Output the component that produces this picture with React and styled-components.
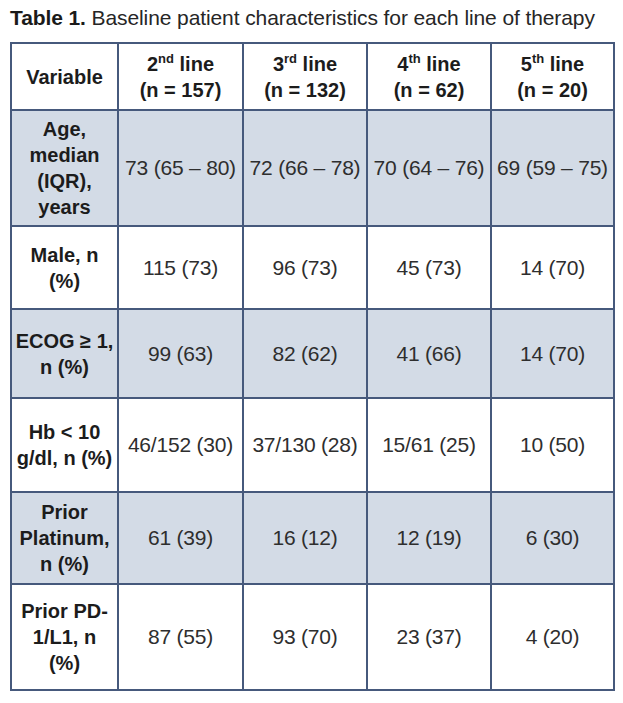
import React from 'react';
import styled, { createGlobalStyle } from 'styled-components';

const GlobalStyle = createGlobalStyle`
    html, body {
        margin: 0;
        padding: 0;
        background: #ffffff;
    }
    body {
        font-family: "Liberation Sans", Arial, sans-serif;
    }
`

const rows = [
    { label: ['Age,', 'median', '(IQR),', 'years'], values: ['73 (65 – 80)', '72 (66 – 78)', '70 (64 – 76)', '69 (59 – 75)'], height: 116, shaded: true },
    { label: ['Male, n', '(%)'], values: ['115 (73)', '96 (73)', '45 (73)', '14 (70)'], height: 83 },
    { label: ['ECOG ≥ 1,', 'n (%)'], values: ['99 (63)', '82 (62)', '41 (66)', '14 (70)'], height: 89, shaded: true },
    { label: ['Hb < 10', 'g/dl, n (%)'], values: ['46/152 (30)', '37/130 (28)', '15/61 (25)', '10 (50)'], height: 94 },
    { label: ['Prior', 'Platinum,', 'n (%)'], values: ['61 (39)', '16 (12)', '12 (19)', '6 (30)'], height: 92, shaded: true },
    { label: ['Prior PD-', '1/L1, n', '(%)'], values: ['87 (55)', '93 (70)', '23 (37)', '4 (20)'], height: 106 },
]

const lines = [
    { num: '2', sup: 'nd', n: 157 },
    { num: '3', sup: 'rd', n: 132 },
    { num: '4', sup: 'th', n: 62 },
    { num: '5', sup: 'th', n: 20 },
]

function App() {
    return (
        <Page>
            <GlobalStyle />
            <Caption>
                <b>Table 1.</b> Baseline patient characteristics for each line of therapy
            </Caption>
            <Table>
                <colgroup>
                    <col style={{ width: 107 }} />
                    <col style={{ width: 125 }} />
                    <col style={{ width: 124 }} />
                    <col style={{ width: 124 }} />
                    <col style={{ width: 123 }} />
                </colgroup>
                <thead>
                    <Row height={67}>
                        <HeadCell>Variable</HeadCell>
                        {lines.map((l) => (
                            <HeadCell key={l.num}>
                                {l.num}<Sup>{l.sup}</Sup> line<br />(n = {l.n})
                            </HeadCell>
                        ))}
                    </Row>
                </thead>
                <tbody>
                    {rows.map((r, i) => (
                        <Row key={i} height={r.height} shaded={r.shaded}>
                            <LabelCell>
                                {r.label.map((t, j) => (
                                    <React.Fragment key={j}>
                                        {j > 0 && <br />}
                                        {t}
                                    </React.Fragment>
                                ))}
                            </LabelCell>
                            {r.values.map((v, j) => (
                                <ValueCell key={j}>{v}</ValueCell>
                            ))}
                        </Row>
                    ))}
                </tbody>
            </Table>
        </Page>
    )
}

export default App


const Page = styled.div `
    padding: 0 0 0 10px;
    width: 623px;
    box-sizing: border-box;
`

const Caption = styled.div `
    font-size: 21px;
    line-height: 24px;
    color: #262626;
    padding-top: 6px;
    height: 42px;
    box-sizing: border-box;
    white-space: nowrap;
    letter-spacing: -0.1px;

    b {
        font-weight: 700;
        color: #1a1a1a;
    }
`

const Table = styled.table `
    border-collapse: collapse;
    table-layout: fixed;
    width: 603px;
    border: 2px solid #6f7f97;
`

const Row = styled.tr `
    height: ${(p) => p.height}px;
    background: ${(p) => (p.shaded ? '#d3dbe6' : '#ffffff')};
`

const cellBase = `
    border: 2px solid #46597c;
    text-align: center;
    vertical-align: middle;
    padding: 0 1px;
    line-height: 26px;
`

const HeadCell = styled.th `
    ${cellBase}
    font-size: 20px;
    font-weight: 700;
    color: #1c1c1c;
`

const LabelCell = styled.td `
    ${cellBase}
    font-size: 20px;
    font-weight: 700;
    color: #1c1c1c;
`

const ValueCell = styled.td `
    ${cellBase}
    font-size: 21px;
    color: #2e2e2e;
    white-space: nowrap;
    letter-spacing: -0.2px;
`

const Sup = styled.sup `
    font-size: 13px;
    line-height: 0;
    vertical-align: 8px;
`
